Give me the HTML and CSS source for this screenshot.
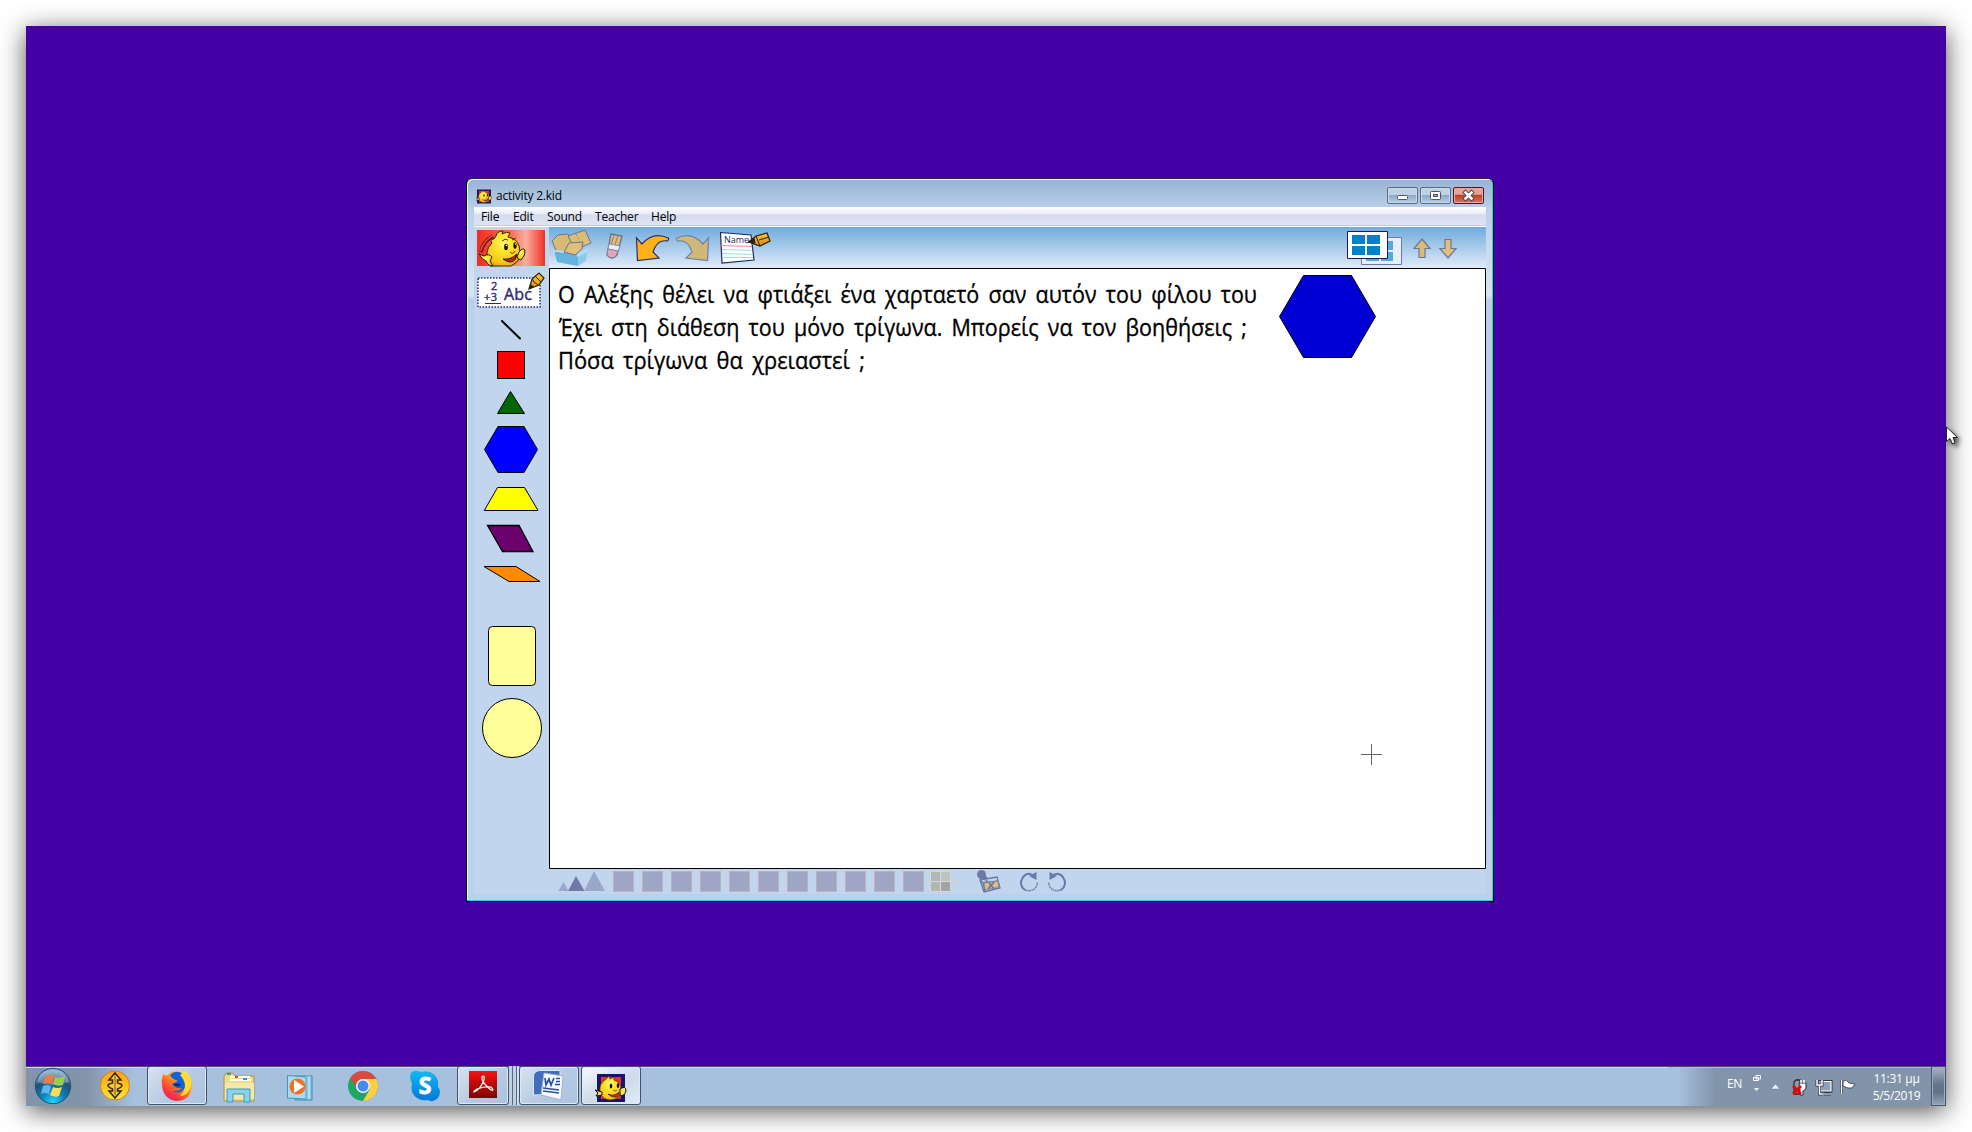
FILE: index.html
```html
<!DOCTYPE html>
<html lang="el">
<head>
<meta charset="utf-8">
<title>activity 2.kid</title>
<link rel="stylesheet" href="styles.css">
</head>
<body>
<svg class="defs" width="0" height="0">
  <defs>
    <radialGradient id="gold" cx=".5" cy=".35" r=".75"><stop offset="0" stop-color="#fff68a"/><stop offset=".3" stop-color="#ffe62c"/><stop offset=".75" stop-color="#fbc51c"/><stop offset="1" stop-color="#dd9300"/></radialGradient>
    <linearGradient id="red" x1="0" x2="1"><stop offset="0" stop-color="#ee2e22"/><stop offset=".5" stop-color="#f5705a"/><stop offset=".72" stop-color="#fbae9c"/><stop offset="1" stop-color="#ee3024"/></linearGradient>
    <radialGradient id="orb" cx=".5" cy=".95" r=".9"><stop offset="0" stop-color="#20d8ff"/><stop offset=".35" stop-color="#0a86bd"/><stop offset=".7" stop-color="#1f5077"/><stop offset="1" stop-color="#7fa6c2"/></radialGradient>
    <linearGradient id="acro" x1="0" y1="0" x2="0" y2="1"><stop offset="0" stop-color="#f81010"/><stop offset="1" stop-color="#7c0404"/></linearGradient>
    <linearGradient id="fox" x1=".9" y1="0" x2=".2" y2="1"><stop offset="0" stop-color="#fff13a"/><stop offset=".4" stop-color="#ff9a1c"/><stop offset=".75" stop-color="#ff3a3c"/><stop offset="1" stop-color="#e0206c"/></linearGradient>
    <linearGradient id="pen" x1="0" y1="0" x2="0" y2="1"><stop offset="0" stop-color="#ffc53a"/><stop offset="1" stop-color="#d98a05"/></linearGradient>
    <linearGradient id="sky" x1="0" y1="0" x2="0" y2="1"><stop offset="0" stop-color="#14b8f4"/><stop offset="1" stop-color="#0078d8"/></linearGradient>
    <linearGradient id="coin" x1="0" y1="0" x2="0" y2="1"><stop offset="0" stop-color="#ff9f22"/><stop offset=".5" stop-color="#ffc21c"/><stop offset="1" stop-color="#ffe83c"/></linearGradient>
    <symbol id="kid" viewBox="0 0 32 28">
      <path d="M2 0H30V28H2z" fill="#1b1464"/><path d="M6 3H26V25H6z" fill="#e0342c"/>
      <path d="M5 18Q4 9 10 6L14 2L15 5L19 3L19 6Q26 8 26 16Q26 25 16 26Q7 26 5 18z" fill="url(#gold)" stroke="#3a2b00" stroke-width=".7"/>
      <path d="M0 16L3 19L1 22L7 21L7 18zM25 15Q31 11 31 17Q29 23 25 21z" fill="#ffe05a" stroke="#111"/>
      <ellipse cx="16" cy="12" rx="1.300" ry="2.500" fill="#111"/><ellipse cx="23" cy="11.500" rx="1.200" ry="2.500" fill="#111"/><path d="M13 20Q19 23 24 18Q24 24 19 23Q16 23 13 20z" fill="#d22d20" stroke="#111" stroke-width=".6"/><path d="M18 16Q20 18 22 16" fill="none" stroke="#9a5b00"/>
    </symbol>
  </defs>
</svg>
<div class="desktop">
  <main class="window">
    <header class="titlebar">
      <svg width="16" height="15"><use href="#kid" width="16" height="15"/></svg>
      <span class="title">activity 2.kid</span>
      <div class="controls">
        <span class="ctl"><svg viewBox="0 0 31 17"><rect x="10.500" y="8.500" width="10" height="4" rx="1" fill="#fff" stroke="#4d5768"/></svg></span>
        <span class="ctl"><svg viewBox="0 0 31 17"><rect x="10.500" y="4.500" width="10" height="8" rx="1" fill="#fff" stroke="#4d5768"/><rect x="13.500" y="7.500" width="4" height="2" fill="#91a9c3" stroke="#4d5768"/></svg></span>
        <span class="ctl close"><svg viewBox="0 0 31 17"><path d="M12.500 5.500L18.500 11.500M18.500 5.500L12.500 11.500" stroke="#514957" stroke-width="4.500" stroke-linecap="square"/><path d="M12.500 5.500L18.500 11.500M18.500 5.500L12.500 11.500" stroke="#fff" stroke-width="2.600" stroke-linecap="square"/></svg></span>
      </div>
    </header>
    <nav class="menu"><span class="m1">File</span><span class="m2">Edit</span><span class="m3">Sound</span><span class="m4">Teacher</span><span class="m5">Help</span></nav>
    <div class="work">
      <aside class="tools">
        <svg width="75" height="41" viewBox="474 227 75 41">
          <rect x="477" y="230" width="68" height="36" fill="url(#red)"/>
          <path d="M481 252Q483 241 493 236" fill="none" stroke="#5d1010" stroke-width="3.500"/><path d="M480.500 251Q484 240 493 235.500" fill="none" stroke="#f04a38" stroke-width="1.500"/>
          <path d="M490 266Q483 251 492 243Q489 239 494 239L496 236Q497 231 503 231L502 234Q507 231 510 233L508 237Q517 239 519 246Q523 259 514 264L511 266z" fill="url(#gold)" stroke="#332600"/>
          <path d="M479 254L484 256Q489 253 492 257L490 261L493 266Q488 266 486 261Q482 260 479 254z" fill="url(#gold)" stroke="#222"/>
          <path d="M519 252Q523 247 525 250Q526 255 521 260Q518 260 517 257z" fill="url(#gold)" stroke="#222"/>
          <ellipse cx="506" cy="247" rx="1.900" ry="3.200" fill="#17140a"/><ellipse cx="515" cy="245.500" rx="1.600" ry="3.200" fill="#17140a"/><circle cx="506.500" cy="245.500" r=".8" fill="#fff"/><circle cx="515.500" cy="244" r=".7" fill="#fff"/>
          <path d="M502 241Q505 238 508 240M512 240L516 238M510 252Q513 255 515 251" fill="none" stroke="#5a3700"/>
          <path d="M503 259Q511 260 517 254Q516 262 510 262Q507 262 503 259z" fill="#cc1e18" stroke="#222"/>
        </svg>
        <svg width="75" height="44" viewBox="474 268 75 44">
          <rect x="478" y="278" width="62" height="29" fill="#fff" stroke="#322b78" stroke-width="1.500" stroke-dasharray="1.500 1.500"/>
          <g class="toolText"><text x="491" y="290" font-size="11">2</text><text x="484" y="300.500" font-size="11" textLength="13">+3</text><text x="504" y="300" font-size="16" textLength="28">Abc</text></g>
          <path d="M485 303.500H501" stroke="#30296f"/>
          <path d="M529 289L532 279L539 273L544 278L539 285z" fill="url(#pen)" stroke="#29200e" stroke-width="1.200"/><path d="M529 289L530.500 284L534 287z" fill="#29200e"/><path d="M532 279L534 282L538 285M535 276L541 282" fill="none" stroke="#29200e"/>
        </svg>
        <svg width="75" height="34" viewBox="474 312 75 34"><path d="M502 321L520 338.500" stroke="#000" stroke-width="2" stroke-linecap="round"/></svg>
        <svg width="75" height="38" viewBox="474 346 75 38"><rect x="497.500" y="351.500" width="27" height="27" fill="#f00" stroke="#000"/></svg>
        <svg width="75" height="36" viewBox="474 384 75 36"><path d="M510.500 391.500L524.500 413.500H497.500z" fill="#006800" stroke="#000"/></svg>
        <svg width="75" height="60" viewBox="474 420 75 60"><path d="M484.500 449.500L498 426.500H524L537.500 449.500L524 472.500H498z" fill="#00f" stroke="#001"/></svg>
        <svg width="75" height="40" viewBox="474 480 75 40"><path d="M497.500 487.500H524.500L538 510.500H484.300z" fill="#ff0" stroke="#000"/></svg>
        <svg width="75" height="40" viewBox="474 520 75 40"><path d="M487.500 525.500H519L533 551.500H502.500z" fill="#6c006c" stroke="#000" stroke-width="1.300"/></svg>
        <svg width="75" height="40" viewBox="474 560 75 40"><path d="M484 566.500H516L540 581.500H509z" fill="#ff8a00" stroke="#000"/></svg>
        <svg width="75" height="95" viewBox="474 600 75 95"><rect x="488.500" y="626.500" width="47" height="59" rx="4" fill="#ffff99" stroke="#000"/></svg>
        <svg width="75" height="75" viewBox="474 695 75 75"><circle cx="512" cy="728" r="29.500" fill="#ffff99" stroke="#000"/></svg>
      </aside>
      <section class="stage">
        <div class="toolbar">
          <svg width="48" height="41" viewBox="549 227 48 41">
            <path d="M554 250L578 254V266L557 262z" fill="#63b4df"/><path d="M578 254L588 249L586 261L578 266z" fill="#8fcbe9"/>
            <path d="M552 241L558 235L568 234L572 242L568 251L557 253z" fill="#d6bb76" stroke="#6d7394"/>
            <path d="M568 236L585 230L591 243L575 250z" fill="#d9be78" stroke="#6d7394"/>
            <path d="M564 252L569 243L583 242L582 249L575 255z" fill="#dfc078" stroke="#6d7394"/><path d="M576 234L582 246" fill="none" stroke="#94876f" stroke-dasharray="2 2"/>
            <path d="M554 251L564 252M577 256L588 250" fill="none" stroke="#b5dff5" stroke-width="2"/>
          </svg>
          <svg width="32" height="41" viewBox="597 227 32 41"><path d="M611 234L622 236L617 255Q612 261 607 255z" fill="#d8bd7d" stroke="#697195" stroke-width="1.300"/><path d="M618 235L615 245M614 235L611 245" stroke="#8d8671"/><path d="M609 244L620 246L618 251L608 249z" fill="#e9eef4" stroke="#7580a5" stroke-width=".7"/><path d="M608 249L618 251L616 256Q611 260 607 255z" fill="#dca9b2" stroke="#77769a" stroke-width=".7"/></svg>
          <svg width="44" height="41" viewBox="629 227 44 41"><path d="M636.500 238L642 244Q653 231 668.500 238Q669 240 667 241Q657 239 653 252L659 258L637.500 260.500z" fill="#ffb11c" stroke="#26306c" stroke-width="1.200"/></svg>
          <svg width="41" height="41" viewBox="673 227 41 41"><path d="M708.500 238L703 244Q692 231 676.500 238Q676 240 678 241Q688 239 692 252L686 258L707.500 260.500z" fill="#d0b977" stroke="#6c7fae" stroke-width="1.200"/></svg>
          <svg width="62" height="41" viewBox="714 227 62 41"><path d="M720.500 232.500L751 235L754 260L722 263z" fill="#fff" stroke="#242a59" stroke-width="1.200"/><path d="M721 245.500L752 246.500" stroke="#f28b8b"/><path d="M722 249.500L751 250.500M722 253.500L752 254.500M723 257.500L753 257.500" stroke="#97dcea"/><text class="name" x="724" y="243" font-size="9" textLength="25">Name</text><path d="M749 242L756 236L767 233L770 241L760 246z" fill="url(#pen)" stroke="#29200e" stroke-width="1.200"/><path d="M748 242L754 238L755 243z" fill="#29200e" stroke="#29200e"/><path d="M756 236L758 241L760 246M759 240L769 237" fill="none" stroke="#29200e"/></svg>
          <svg class="pages" width="64" height="41" viewBox="1343 227 64 41"><path d="M1361.500 237.500H1401.500V264.500H1361.500z" fill="#e5eff9" stroke="#7478a5"/><path d="M1380 241H1393V250H1380zM1366 252H1379V261H1366zM1381 252H1393V261H1381z" fill="#54a9de"/><path d="M1347.500 231.500H1387.500V258.500H1347.500z" fill="#fff" stroke="#21175c"/><path d="M1352 235H1365V244H1352zM1367 235H1380V244H1367zM1352 246H1365V255H1352zM1367 246H1380V255H1367z" fill="#0082cb"/></svg>
          <svg width="79" height="41" viewBox="1407 227 79 41"><path d="M1422 239L1430 248.500H1425V257.500H1419V248.500H1414z" fill="#d8bc76" stroke="#6e749c" stroke-width="1.200"/><path d="M1448 258L1456 248.500H1451V239.500H1445V248.500H1440z" fill="#dec07a" stroke="#6e749c" stroke-width="1.200"/></svg>
        </div>
        <svg class="canvas" width="937" height="601" viewBox="549 268 937 601">
          <g class="task"><text x="558" y="303" textLength="699" lengthAdjust="spacingAndGlyphs">Ο Αλέξης θέλει να φτιάξει ένα χαρταετό σαν αυτόν του φίλου του</text><text x="559" y="336" textLength="688" lengthAdjust="spacingAndGlyphs">Έχει στη διάθεση του μόνο τρίγωνα. Μπορείς να τον βοηθήσεις ;</text><text x="558" y="369" textLength="307" lengthAdjust="spacingAndGlyphs">Πόσα τρίγωνα θα χρειαστεί ;</text></g>
          <path d="M1279.500 316.500L1303.500 275.500H1351.500L1375.500 316.500L1351.500 357.500H1303.500z" fill="#0000d4" stroke="#000"/>
          <path d="M1361 754.500H1382M1371.500 744V765" stroke="#666"/>
          <path d="M549.500 268.500H1485.500V868.500H549.500z" fill="none" stroke="#000"/>
        </svg>
        <div class="bottombar">
          <svg width="61" height="25" viewBox="549 869 61 25"><path d="M558.500 891L563.500 882L568.500 891zM584 891L594 871L605 891z" fill="#99a7ca"/><path d="M568 891L576 876L584.500 891z" fill="#7078a4"/></svg>
          <div class="swatches"><i></i><i></i><i></i><i></i><i></i><i></i><i></i><i></i><i></i><i></i><i></i></div>
          <svg width="46" height="25" viewBox="928 869 46 25"><path d="M930 871H951V892H930z" fill="#d6d8d4"/><path d="M931 872H940V881H931zM931 882H940V891H931z" fill="#b1b7b5"/><path d="M941 872H950V881H941z" fill="#bdc4c4"/><path d="M941 882H950V891H941z" fill="#a2a4a7"/><path d="M953 880H960L956.500 883.500z" fill="#d1cfcf"/></svg>
          <svg width="36" height="25" viewBox="974 869 36 25"><circle cx="981.500" cy="874.500" r="4.500" fill="#6e78a7"/><path d="M983 876L988 881" stroke="#6e78a7" stroke-width="4"/><path d="M980 880L997 877L1000 888L984 892zM980 880L983 883L998 881M983 883L985 891" fill="#c5d8ee" stroke="#6877a7" stroke-width="1.300"/><path d="M984 883L998 881L999 887L985 890z" fill="#dfbf78" stroke="#6877a7" stroke-width=".7"/><path d="M989 883L994 889M994 882L988 889" stroke="#6e78a7" stroke-width="1.800"/></svg>
          <svg width="66" height="25" viewBox="1010 869 66 25"><g id="turn"><path d="M1034 876Q1028 871 1023 877Q1018 885 1025 890" fill="none" stroke="#6b78a7" stroke-width="2"/><path d="M1025 890Q1036 893 1037.500 882" fill="none" stroke="#6b78a7" stroke-width="1.600" stroke-dasharray="1.500 .7"/><path d="M1036.500 872V880L1029 876z" fill="#6b78a7"/></g><use href="#turn" transform="translate(2086 0) scale(-1 1)"/></svg>
        </div>
      </section>
    </div>
  </main>
  <footer class="taskbar">
    <svg width="62" height="40" viewBox="26 1066 62 40"><circle cx="53" cy="1086" r="17.700" fill="url(#orb)" stroke="#234f70"/><path d="M37 1082Q40 1070 53 1070Q66 1070 69 1082Q53 1088 37 1082z" fill="#fff" opacity=".28"/><path d="M46 1076Q50 1074 54 1076L52 1084Q48 1082 43 1084z" fill="#f47a3c"/><path d="M55 1077Q59 1079 65 1076L63 1085Q58 1087 53 1084z" fill="#9bcf49"/><path d="M43 1086Q47 1084 51 1086L49 1094Q45 1092 41 1094z" fill="#5bb5ef"/><path d="M53 1087Q58 1089 62 1087L59 1096Q55 1098 50 1095z" fill="#ffda55"/></svg>
    <svg width="58" height="40" viewBox="88 1066 58 40"><circle cx="115" cy="1085.500" r="14.500" fill="url(#coin)" stroke="#d98014"/><path d="M115 1073L121 1080H117.500V1083Q122 1084 122 1085.500Q122 1087 117.500 1089V1091H121L115 1098L109 1091H112.500V1089Q108 1087 108 1085.500Q108 1084 112.500 1083V1080H109z" fill="#ffc838" stroke="#33260a" stroke-width="1.500"/><path d="M115 1076V1095" stroke="#33260a" stroke-width=".7"/></svg>
    <div class="task-button firefox"><svg width="60" height="40" viewBox="147 1066 60 40"><path d="M163 1074Q165 1076 168 1075Q171 1071 175 1071L184 1071Q193 1076 192 1087Q190 1101 176 1101Q163 1099 162 1085Q161 1080 163 1074z" fill="url(#fox)"/><path d="M170 1075Q176 1069 183 1074Q190 1082 184 1089Q179 1095 173 1091Q180 1091 182 1088Q175 1089 172 1084L178 1081Q172 1079 170 1075z" fill="#1261dc"/><path d="M173 1084Q178 1083 181 1084Q178 1089 173 1084z" fill="#17266e"/><path d="M180 1075Q183 1073 184 1070Q193 1077 191 1087Q187 1096 180 1096Q190 1086 180 1075z" fill="#ffdb35"/></svg></div>
    <svg width="69" height="40" viewBox="207 1066 69 40"><path d="M224 1077L226 1073H233L235 1076H254V1101H224z" fill="#f0dc88" stroke="#ad9448"/><path d="M230 1077H250M230 1080H251" stroke="#fff" stroke-width="2"/><path d="M227 1074h4" stroke="#3aa43a" stroke-width="2"/><path d="M235 1077h3" stroke="#d34d2c" stroke-width="2"/><path d="M243 1079h4" stroke="#2496df" stroke-width="2"/><path d="M225 1083H254V1099H225z" fill="#f6e9a8"/><path d="M227 1102V1089H250V1102H244V1094H233V1102z" fill="#8bd0ed" stroke="#3c9abc"/></svg>
    <svg width="63" height="40" viewBox="276 1066 63 40"><path d="M295 1076H312V1100H295z" fill="#87c8ea" stroke="#398eb9"/><path d="M309 1076V1099M306 1076V1099" stroke="#dff5ff"/><path d="M287.500 1075.500L306 1077V1099L287.500 1098z" fill="#a8dcf3" stroke="#4494b9"/><circle cx="297.500" cy="1086.500" r="8" fill="#f37120"/><path d="M294 1080V1093L304 1086.500z" fill="#fff"/></svg>
    <svg width="55" height="40" viewBox="339 1066 55 40"><circle cx="363" cy="1086" r="15" fill="#20a565"/><path d="M350 1078.500A15 15 0 0 1 376 1078.500L378 1079H363L356 1086z" fill="#d8493f"/><path d="M363 1079H376.300A15 15 0 0 1 363 1101L370 1089z" fill="#ffce44"/><circle cx="363" cy="1086" r="7" fill="#f5f7fb"/><circle cx="363" cy="1086" r="5.500" fill="#4788f2"/></svg>
    <svg width="63" height="40" viewBox="394 1066 63 40"><path d="M411 1073Q415 1069 421 1072Q431 1069 437 1078Q439 1082 438 1087Q442 1092 438 1098Q433 1103 428 1100Q417 1102 412 1092Q411 1088 412 1083Q409 1078 411 1073z" fill="url(#sky)"/><text class="s-mark" x="425" y="1094" text-anchor="middle">S</text></svg>
    <div class="task-button acrobat"><svg width="51" height="40" viewBox="457 1066 51 40"><path d="M469 1071H497V1098H469z" fill="url(#acro)"/><path d="M474 1092Q480 1090 484 1080Q485 1074 482 1077Q481 1082 491 1090Q495 1091 491 1087Q486 1086 477 1089Q473 1092 474 1092z" fill="none" stroke="#fff" stroke-width="1.200"/></svg></div>
    <div class="stack"></div>
    <div class="task-button"><svg width="60" height="40" viewBox="519 1066 60 40"><path d="M533.500 1095V1076Q534 1071 540 1070.500H560V1094z" fill="#416dbb" stroke="#d9e7fa"/><path d="M544 1073L563 1076L561 1100L541 1095z" fill="#f8faff" stroke="#9db2d1"/><path d="M545 1078L546 1085L549 1079L551 1085L554 1078M556 1078.500H560M556 1081.500H560M555 1084.500H560M543 1088L559 1090M543 1091L559 1093" fill="none" stroke="#2551a1" stroke-width="1.700"/></svg></div>
    <div class="task-button active"><svg width="60" height="40" viewBox="581 1066 60 40"><use href="#kid" x="595" y="1074" width="32" height="28"/></svg></div>
    <div class="tray">
      <span class="lang">EN</span>
      <svg width="18" height="40" viewBox="1748 1066 18 40"><path d="M1756 1075.500H1760.500V1079H1756zM1753.500 1077.500H1758.500V1080.500H1753.500z" fill="#8494aa" stroke="#fff"/><path d="M1754 1088H1759L1756.500 1091z" fill="#fff"/></svg>
      <svg width="24" height="40" viewBox="1766 1066 24 40"><path d="M1771 1089L1775.500 1084L1780 1089z" fill="#f2f5fa" stroke="#66758c" stroke-width=".5"/></svg>
      <svg width="24" height="40" viewBox="1790 1066 24 40"><path d="M1794 1094V1082L1796 1080H1800V1094z" fill="#8f9aa6" stroke="#222a36" stroke-width="1.300"/><path d="M1799 1083H1806V1088Q1805 1091 1803 1091V1095H1800V1090z" fill="#fff" stroke="#222a36"/><path d="M1801 1083V1080M1804 1083V1080" stroke="#fff" stroke-width="1.500"/><path d="M1793 1086L1801 1094M1801 1086L1793 1094" stroke="#e80505" stroke-width="2.800"/></svg>
      <svg width="24" height="40" viewBox="1814 1066 24 40"><path d="M1820 1081.500H1831V1091H1820zM1824 1094H1831" fill="#9aacc0" stroke="#2c3644" stroke-width="3"/><path d="M1820 1081.500H1831V1091H1820zM1824 1094H1831" fill="#8da1b8" stroke="#fff" stroke-width="1.200"/><path d="M1817 1080V1085H1822V1080M1819.500 1085V1094H1823" fill="none" stroke="#2c3644" stroke-width="3"/><path d="M1817 1080V1085H1822V1080M1819.500 1085V1094H1823" fill="none" stroke="#fff" stroke-width="1.500"/></svg>
      <svg width="24" height="40" viewBox="1838 1066 24 40"><path d="M1841.500 1080V1094" stroke="#2c3644" stroke-width="3"/><path d="M1841.500 1080V1094" stroke="#fff" stroke-width="1.500"/><path d="M1843 1081Q1847 1079 1849 1083L1855 1084L1852 1088H1848L1843 1086z" fill="#fff" stroke="#2c3644" stroke-width=".8"/></svg>
      <div class="clock"><span>11:31 μμ</span><span>5/5/2019</span></div>
      <div class="show-desktop"></div>
    </div>
  </footer>
</div>
<svg class="cursor" width="20" height="26" viewBox="0 0 20 26"><path d="M.5 1V15.500L4 12.500L6.500 18L9 17L7 11.500H11.500z" fill="#fff" stroke="#222" stroke-width="1"/></svg>
</body>
</html>
```

FILE: styles.css
```css
* { box-sizing: border-box; }
body { margin: 0; width: 1972px; height: 1132px; overflow: hidden; padding: 26px; background: #fff; font-family: "Open Sans", "Noto Sans", sans-serif; }
svg { display: block; flex: none; }
.defs { position: absolute; }
.desktop { position: relative; width: 1920px; height: 1080px; background: #4400a4; display: flex; flex-direction: column; justify-content: flex-end; box-shadow: 0 5px 24px rgba(0,0,0,.68); }
.window { position: absolute; left: 440px; top: 152px; width: 1028px; height: 724px; padding: 0 7px 6px; border: 1px solid #000; border-radius: 6px 6px 0 0; border-top-color: #222b38; background: linear-gradient(#98b3d1 0, #b8d0e9 29px, #d8e5f3 116px, #b9d0ea 121px, #bbd1eb); box-shadow: inset -1px -1px #24cfe8, inset 1px 1px #edf6fc; }
.titlebar { height: 28px; display: flex; padding: 10px 0 0 2px; }
.title { font-size: 12px; line-height: 16px; margin: -1px 0 0 4px; letter-spacing: -.22px; }
.controls { display: flex; gap: 2px; margin: -2px 2px 0 auto; }
.ctl { width: 31px; height: 17px; border: 1px solid #5b6b84; border-radius: 2px; background: linear-gradient(#c0d1e4 0 45%, #8ca9c6 50%, #b9cfe5); box-shadow: inset 0 0 0 1px #cbd9e8; }
.ctl svg { margin: -1px; width: 31px; height: 17px; }
.close { border-color: #4c1626; background: linear-gradient(#e6a293 0 42%, #b94028 48%, #d67561); box-shadow: inset 0 0 0 1px #e7a9a0; }
.menu { height: 20px; display: flex; padding-left: 7px; border-bottom: 1px solid #fff; background: linear-gradient(#fff, #e7ebf5 7px, #d4dbee 8px, #dfe4f4 18px, #a9b1c9 19px); font-size: 12px; line-height: 19px; letter-spacing: -.2px; }
.m1 { width: 32px; } .m2 { width: 34px; } .m3 { width: 48px; } .m4 { width: 56px; }
.work { display: flex; height: 667px; background: #c1d6ee; }
.tools { width: 75px; }
.toolText { font-family: "Open Sans", sans-serif; fill: #302968; stroke: #302968; stroke-width: .4px; }
.name { fill: #242a59; }
.stage { width: 937px; }
.toolbar { height: 41px; display: flex; background: linear-gradient(#70abdc, #e1ebf8); }
.pages { margin-left: auto; }
.canvas { background: #fff; }
.task { font-family: "Open Sans", "Noto Sans", sans-serif; font-size: 24px; word-spacing: 4px; fill: #000; stroke: #000; stroke-width: .35px; }
.bottombar { display: flex; height: 25px; }
.swatches { display: flex; gap: 8px; padding: 2px 4px 0 3px; width: 318px; }
.swatches i { width: 21px; height: 21px; flex: none; background: #9fa5c4; border: 1px solid #bcb2bb; }
.taskbar { display: flex; height: 40px; background: linear-gradient(90deg, #8294aa, #8294aa 60px, #a7c0dd 108px); box-shadow: inset 0 1px #465462, inset 0 2px #cbdbea; }
.task-button { width: 60px; height: 39px; margin-right: 2px; border: 1px solid #465360; border-radius: 3px; background: linear-gradient(135deg, #d8e3f0, #b7cbe2 50%, #abc3df); box-shadow: inset 0 0 0 1px #dce8f5; }
.task-button svg { margin: -1px; }
.s-mark { font: bold 23px "Open Sans", sans-serif; fill: #fff; stroke: #fff; stroke-width: .8px; }
.firefox { margin: 0 0 0 1px; }
.acrobat { width: 52px; margin: 0; }
.stack { width: 10px; height: 39px; background: linear-gradient(90deg, #bdd0e5 3px, #596a7d 3px 4px, #bdd0e5 4px 7px, #596a7d 7px 8px, #d0deed 8px); }
.active { background: linear-gradient(150deg, #f6faff, #cbd9e9 55%, #e1ecf7); }
.tray { margin-left: auto; width: 278px; display: flex; background: linear-gradient(90deg, #a7c0dd 10px, #8294aa 47px); box-shadow: inset 0 1px #465462, inset 0 2px #aebdcb; color: #fff; }
.lang { width: 80px; padding: 9px 0 0 59px; font-size: 12px; line-height: 17px; letter-spacing: -.5px; }
.clock { width: 69px; display: flex; flex-direction: column; align-items: center; padding: 4px 0 0; font-size: 12px; line-height: 17px; letter-spacing: -.3px; white-space: nowrap; }
.show-desktop { width: 15px; height: 40px; border: 1px solid #46556a; background: linear-gradient(#a8b5c5, #65768b 45%, #5f7186 65%, #94a4b8); box-shadow: inset 0 0 0 1px #9fadbf; }
.cursor { position: absolute; left: 1946px; top: 426px; filter: drop-shadow(3px 3px 2px #0009); }
```
